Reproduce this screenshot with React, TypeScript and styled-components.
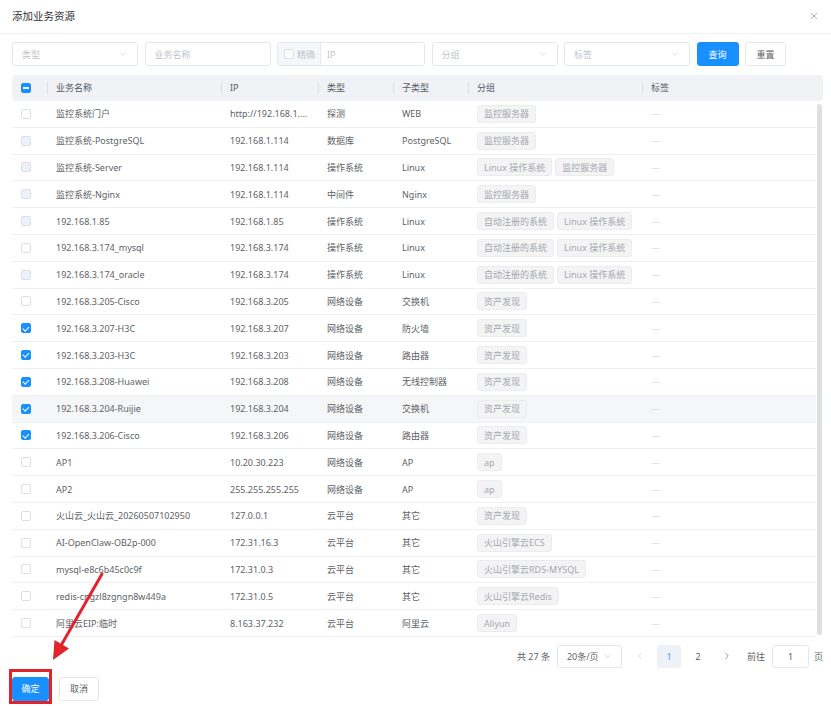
import React from "react"
import styled, { createGlobalStyle } from "styled-components"
import { ChevronDown, ChevronLeft, ChevronRight, X } from "lucide-react"

const GlobalStyle = createGlobalStyle`
  html, body {
    margin: 0;
    padding: 0;
    background: #fff;
  }
  body {
    font-family: "Noto Sans", "Noto Sans CJK SC", sans-serif;
    color: #606266;
  }
  * {
    box-sizing: border-box;
  }
`

type CheckState = "off" | "disabled" | "on" | "partial"

type Resource = {
  name: string
  ip: string
  type: string
  sub: string
  groups: string[]
  state: CheckState
  hover?: boolean
}

const rows: Resource[] = [
  { name: "监控系统门户", ip: "http://192.168.1....", type: "探测", sub: "WEB", groups: ["监控服务器"], state: "off" },
  { name: "监控系统-PostgreSQL", ip: "192.168.1.114", type: "数据库", sub: "PostgreSQL", groups: ["监控服务器"], state: "disabled" },
  { name: "监控系统-Server", ip: "192.168.1.114", type: "操作系统", sub: "Linux", groups: ["Linux 操作系统", "监控服务器"], state: "disabled" },
  { name: "监控系统-Nginx", ip: "192.168.1.114", type: "中间件", sub: "Nginx", groups: ["监控服务器"], state: "disabled" },
  { name: "192.168.1.85", ip: "192.168.1.85", type: "操作系统", sub: "Linux", groups: ["自动注册的系统", "Linux 操作系统"], state: "disabled" },
  { name: "192.168.3.174_mysql", ip: "192.168.3.174", type: "操作系统", sub: "Linux", groups: ["自动注册的系统", "Linux 操作系统"], state: "off" },
  { name: "192.168.3.174_oracle", ip: "192.168.3.174", type: "操作系统", sub: "Linux", groups: ["自动注册的系统", "Linux 操作系统"], state: "disabled" },
  { name: "192.168.3.205-Cisco", ip: "192.168.3.205", type: "网络设备", sub: "交换机", groups: ["资产发现"], state: "off" },
  { name: "192.168.3.207-H3C", ip: "192.168.3.207", type: "网络设备", sub: "防火墙", groups: ["资产发现"], state: "on" },
  { name: "192.168.3.203-H3C", ip: "192.168.3.203", type: "网络设备", sub: "路由器", groups: ["资产发现"], state: "on" },
  { name: "192.168.3.208-Huawei", ip: "192.168.3.208", type: "网络设备", sub: "无线控制器", groups: ["资产发现"], state: "on" },
  { name: "192.168.3.204-Ruijie", ip: "192.168.3.204", type: "网络设备", sub: "交换机", groups: ["资产发现"], state: "on", hover: true },
  { name: "192.168.3.206-Cisco", ip: "192.168.3.206", type: "网络设备", sub: "路由器", groups: ["资产发现"], state: "on" },
  { name: "AP1", ip: "10.20.30.223", type: "网络设备", sub: "AP", groups: ["ap"], state: "off" },
  { name: "AP2", ip: "255.255.255.255", type: "网络设备", sub: "AP", groups: ["ap"], state: "off" },
  { name: "火山云_火山云_20260507102950", ip: "127.0.0.1", type: "云平台", sub: "其它", groups: ["资产发现"], state: "off" },
  { name: "AI-OpenClaw-OB2p-000", ip: "172.31.16.3", type: "云平台", sub: "其它", groups: ["火山引擎云ECS"], state: "off" },
  { name: "mysql-e8c6b45c0c9f", ip: "172.31.0.3", type: "云平台", sub: "其它", groups: ["火山引擎云RDS-MYSQL"], state: "off" },
  { name: "redis-cngzl8zgngn8w449a", ip: "172.31.0.5", type: "云平台", sub: "其它", groups: ["火山引擎云Redis"], state: "off" },
  { name: "阿里云EIP:临时", ip: "8.163.37.232", type: "云平台", sub: "阿里云", groups: ["Aliyun"], state: "off" },
]

const COLUMNS = "35px 174px 97px 75px 75px 174px 1fr"

const Dialog = styled.div`
  position: relative;
  width: 831px;
  height: 706px;
  background: #fff;
  display: flex;
  flex-direction: column;
  overflow: hidden;
`

const DialogHeader = styled.div`
  height: 34px;
  padding: 0 12px;
  display: flex;
  align-items: center;
  justify-content: space-between;
  border-bottom: 1px solid #eef0f3;
`

const Title = styled.div`
  font-size: 10.5px;
  color: #303133;
  margin-top: -2px;
`

const CloseButton = styled.div`
  display: flex;
  color: #808389;
  margin-top: -2px;
`

const Filters = styled.div`
  margin-top: 8px;
  padding: 0 12px;
  height: 24px;
  display: flex;
  gap: 6.5px;
`

const Field = styled.div<{ $w: number }>`
  width: ${p => p.$w}px;
  height: 24px;
  border: 1px solid #e4e7ed;
  border-radius: 3px;
  padding: 0 9px;
  display: flex;
  align-items: center;
  justify-content: space-between;
  font-size: 9px;
  color: #c0c4cc;
`

const IpGroup = styled.div`
  width: 148px;
  height: 24px;
  border: 1px solid #e4e7ed;
  border-radius: 3px;
  display: flex;
  overflow: hidden;
  font-size: 9px;
`

const IpAddon = styled.div`
  width: 43px;
  background: #f5f7fa;
  border-right: 1px solid #e4e7ed;
  display: flex;
  align-items: center;
  gap: 3px;
  padding-left: 6px;
  color: #c0c4cc;
`

const IpInput = styled.div`
  flex: 1;
  display: flex;
  align-items: center;
  padding-left: 6px;
  color: #c0c4cc;
`

const Button = styled.div<{ $primary?: boolean; $w: number }>`
  width: ${p => p.$w}px;
  height: 24px;
  border-radius: 3px;
  display: flex;
  align-items: center;
  justify-content: center;
  font-size: 9px;
  background: ${p => (p.$primary ? "#1890ff" : "#fff")};
  color: ${p => (p.$primary ? "#fff" : "#606266")};
  border: 1px solid ${p => (p.$primary ? "#1890ff" : "#e4e7ed")};
`

const Table = styled.div`
  margin: 9px 0 0 12px;
  width: 811px;
`

const HeadRow = styled.div`
  display: grid;
  grid-template-columns: ${COLUMNS};
  height: 26px;
  align-items: center;
  background: #f0f2f6;
  border-radius: 4px;
  font-size: 9px;
  color: #565a62;
`

const HeadCell = styled.div<{ $divider?: boolean }>`
  height: 12px;
  line-height: 12px;
  display: flex;
  align-items: center;
  padding-left: ${p => (p.$divider ? 8 : 9)}px;
  border-left: ${p => (p.$divider ? "1px solid #dcdfe6" : "none")};
`

const BodyWrap = styled.div`
  display: flex;
`

const Rows = styled.div`
  flex: 1;
`

const ScrollTrack = styled.div`
  width: 7px;
  padding: 3px 1px 2px 1px;
  display: flex;
`

const ScrollThumb = styled.div`
  flex: 1;
  background: #dddee1;
  border-radius: 3px;
`

const BodyRow = styled.div<{ $hover?: boolean }>`
  display: grid;
  grid-template-columns: ${COLUMNS};
  height: 26.8px;
  align-items: center;
  border-bottom: 1px solid #eef0f4;
  background: ${p => (p.$hover ? "#f5f6f8" : "#fff")};
  font-size: 9px;
  color: #606266;
`

const Cell = styled.div`
  padding: 0 9px;
  white-space: nowrap;
  overflow: hidden;
`

const TagCell = styled.div`
  padding: 0 9px;
  display: flex;
  gap: 3px;
`

const Tag = styled.span`
  height: 18px;
  padding: 0 6px;
  display: inline-flex;
  align-items: center;
  background: #f4f4f5;
  border: 1px solid #ececef;
  border-radius: 3px;
  color: #a5a8ae;
  font-size: 9px;
  white-space: nowrap;
`

const Dash = styled.span`
  color: #cfd1d5;
`

const Box = styled.span<{ $state: CheckState }>`
  width: 10px;
  height: 10px;
  border-radius: 2px;
  display: flex;
  align-items: center;
  justify-content: center;
  border: 1px solid
    ${p => (p.$state === "on" || p.$state === "partial" ? "#1890ff" : "#dcdfe6")};
  background: ${p =>
    p.$state === "on" || p.$state === "partial"
      ? "#1890ff"
      : p.$state === "disabled"
      ? "#edf1fa"
      : "#fff"};
  &::after {
    content: "";
    display: ${p => (p.$state === "on" || p.$state === "partial" ? "block" : "none")};
    ${p =>
      p.$state === "on"
        ? `width: 2.5px; height: 5px; border: solid #fff; border-width: 0 1.3px 1.3px 0; transform: rotate(45deg); margin-top: -1.5px;`
        : `width: 6px; height: 1.5px; background: #fff;`}
  }
`

const Pager = styled.div`
  margin-top: 8px;
  height: 23px;
  padding-right: 8px;
  display: flex;
  justify-content: flex-end;
  align-items: center;
  font-size: 9px;
  color: #606266;
`

const Total = styled.span`
  margin-right: 7px;
`

const SizeSelect = styled.div`
  width: 65px;
  height: 23px;
  border: 1px solid #e4e7ed;
  border-radius: 3px;
  padding: 0 9px;
  display: flex;
  align-items: center;
  justify-content: space-between;
  color: #606266;
`

const Pages = styled.div`
  margin-left: 6px;
  display: flex;
  gap: 5px;
`

const PageBtn = styled.div<{ $active?: boolean; $muted?: boolean }>`
  width: 24px;
  height: 23px;
  border-radius: 3px;
  display: flex;
  align-items: center;
  justify-content: center;
  background: ${p => (p.$active ? "#eef2f8" : "transparent")};
  color: ${p => (p.$active ? "#409eff" : p.$muted ? "#c0c4cc" : "#606266")};
`

const Jump = styled.span`
  margin: 0 7px 0 8px;
`

const JumpInput = styled.div`
  width: 37px;
  height: 23px;
  border: 1px solid #e4e7ed;
  border-radius: 3px;
  display: flex;
  align-items: center;
  justify-content: center;
  margin-right: 5px;
`

const Footer = styled.div`
  margin-top: 9px;
  padding-left: 12px;
  display: flex;
  gap: 10px;
`

const Annotation = styled.div`
  position: absolute;
  left: 9px;
  top: 669px;
  width: 43px;
  height: 35px;
  border: 3px solid #e3232b;
  pointer-events: none;
`

const ArrowLayer = styled.svg`
  position: absolute;
  left: 40px;
  top: 560px;
  pointer-events: none;
`

const Check = ({ state }: { state: CheckState }) => <Box $state={state} />

export default function App() {
  return (
    <>
      <GlobalStyle />
      <Dialog>
        <DialogHeader>
          <Title>添加业务资源</Title>
          <CloseButton>
            <X size={10} strokeWidth={1.6} />
          </CloseButton>
        </DialogHeader>

        <Filters>
          <Field $w={126}>
            <span>类型</span>
            <ChevronDown size={10} strokeWidth={1.4} />
          </Field>
          <Field $w={126}>
            <span>业务名称</span>
          </Field>
          <IpGroup>
            <IpAddon>
              <Check state="off" />
              <span>精确</span>
            </IpAddon>
            <IpInput>IP</IpInput>
          </IpGroup>
          <Field $w={126}>
            <span>分组</span>
            <ChevronDown size={10} strokeWidth={1.4} />
          </Field>
          <Field $w={126}>
            <span>标签</span>
            <ChevronDown size={10} strokeWidth={1.4} />
          </Field>
          <Button $primary $w={42}>查询</Button>
          <Button $w={41}>重置</Button>
        </Filters>

        <Table>
          <HeadRow>
            <HeadCell>
              <Check state="partial" />
            </HeadCell>
            <HeadCell $divider>业务名称</HeadCell>
            <HeadCell $divider>IP</HeadCell>
            <HeadCell $divider>类型</HeadCell>
            <HeadCell $divider>子类型</HeadCell>
            <HeadCell $divider>分组</HeadCell>
            <HeadCell $divider>标签</HeadCell>
          </HeadRow>
          <BodyWrap>
            <Rows>
              {rows.map(r => (
                <BodyRow key={r.name} $hover={r.hover}>
                  <Cell>
                    <Check state={r.state} />
                  </Cell>
                  <Cell>{r.name}</Cell>
                  <Cell>{r.ip}</Cell>
                  <Cell>{r.type}</Cell>
                  <Cell>{r.sub}</Cell>
                  <TagCell>
                    {r.groups.map(g => (
                      <Tag key={g}>{g}</Tag>
                    ))}
                  </TagCell>
                  <Cell>
                    <Dash>—</Dash>
                  </Cell>
                </BodyRow>
              ))}
            </Rows>
            <ScrollTrack>
              <ScrollThumb />
            </ScrollTrack>
          </BodyWrap>
        </Table>

        <Pager>
          <Total>共 27 条</Total>
          <SizeSelect>
            <span>20条/页</span>
            <ChevronDown size={9} strokeWidth={1.4} color="#a8abb2" />
          </SizeSelect>
          <Pages>
            <PageBtn $muted>
              <ChevronLeft size={10} strokeWidth={1.4} />
            </PageBtn>
            <PageBtn $active>1</PageBtn>
            <PageBtn>2</PageBtn>
            <PageBtn>
              <ChevronRight size={10} strokeWidth={1.6} />
            </PageBtn>
          </Pages>
          <Jump>前往</Jump>
          <JumpInput>1</JumpInput>
          <span>页</span>
        </Pager>

        <Footer>
          <Button $primary $w={37}>确定</Button>
          <Button $w={40}>取消</Button>
        </Footer>

        <Annotation />
        <ArrowLayer width="80" height="110" viewBox="0 0 80 110">
          <line x1="62" y1="14" x2="19" y2="89" stroke="#e3232b" strokeWidth="3" strokeLinecap="round" />
          <polygon points="13,100 14.5,80 29,88.5" fill="#e3232b" />
        </ArrowLayer>
      </Dialog>
    </>
  )
}
